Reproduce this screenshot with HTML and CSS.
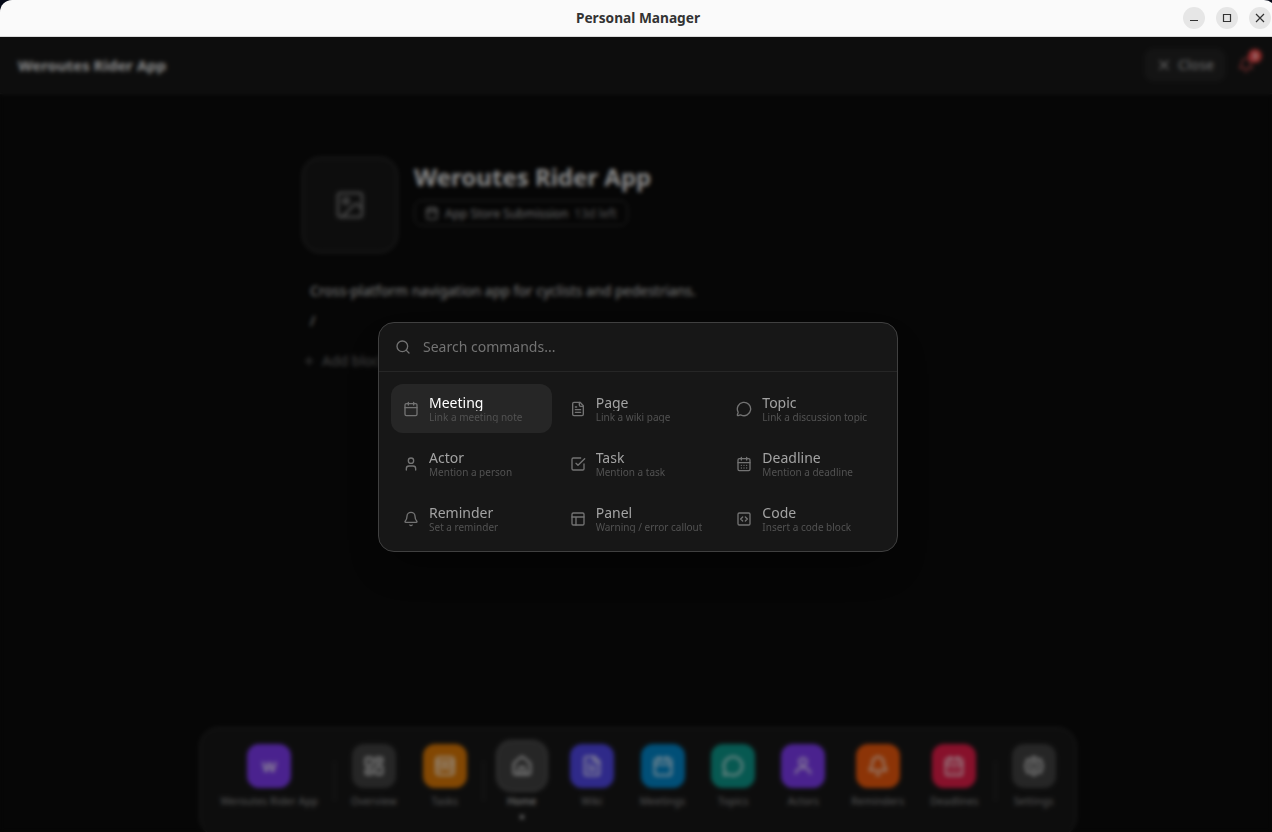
FILE: index.html
```html
<!DOCTYPE html>
<html lang="en">
<head>
    <meta charset="UTF-8">
    <meta name="viewport" content="width=device-width, initial-scale=1.0">
    <title>Personal Manager</title>
    <link rel="stylesheet" href="styles.css">
</head>
<body>
    <svg class="sprite">
        <symbol id="calendar" viewBox="0 0 24 24"><path d="M8 2v4M16 2v4M3 10h18"/><rect x="3" y="4" width="18" height="18" rx="2"/></symbol>
        <symbol id="calendar-days" viewBox="0 0 24 24"><path d="M8 2v4M16 2v4M3 10h18M8 14h.01M12 14h.01M16 14h.01M8 18h.01M12 18h.01M16 18h.01"/><rect x="3" y="4" width="18" height="18" rx="2"/></symbol>
        <symbol id="file" viewBox="0 0 24 24"><path d="M15 2H6a2 2 0 0 0-2 2v16a2 2 0 0 0 2 2h12a2 2 0 0 0 2-2V7Z"/><path d="M14 2v4a2 2 0 0 0 2 2h4M10 9H8M16 13H8M16 17H8"/></symbol>
        <symbol id="message" viewBox="0 0 24 24"><path d="M2.992 16.342a2 2 0 0 1 .094 1.167l-1.065 3.290a1 1 0 0 0 1.236 1.168l3.413-.998a2 2 0 0 1 1.099.092 10 10 0 1 0-4.777-4.719"/></symbol>
        <symbol id="user" viewBox="0 0 24 24"><path d="M19 21v-2a4 4 0 0 0-4-4H9a4 4 0 0 0-4 4v2"/><circle cx="12" cy="7" r="4"/></symbol>
        <symbol id="user-round" viewBox="0 0 24 24"><path d="M4 20c1-4 4-6 8-6s7 2 8 6"/><circle cx="12" cy="7.5" r="4"/></symbol>
        <symbol id="task" viewBox="0 0 24 24"><path d="m9 11 3 3L22 4"/><path d="M21 12v7a2 2 0 0 1-2 2H5a2 2 0 0 1-2-2V5a2 2 0 0 1 2-2h11"/></symbol>
        <symbol id="bell" viewBox="0 0 24 24"><path d="M10.268 21a2 2 0 0 0 3.464 0"/><path d="M3.262 15.326A1 1 0 0 0 4 17h16a1 1 0 0 0 .74-1.673C19.41 13.956 18 12.499 18 8A6 6 0 0 0 6 8c0 4.499-1.411 5.956-2.738 7.326"/></symbol>
        <symbol id="panel" viewBox="0 0 24 24"><rect x="3" y="3" width="18" height="18" rx="2"/><path d="M3 9h18M9 21V9"/></symbol>
        <symbol id="code" viewBox="0 0 24 24"><rect x="3" y="3" width="18" height="18" rx="2"/><path d="m10 9-3 3 3 3M14 9l3 3-3 3"/></symbol>
        <symbol id="search" viewBox="0 0 24 24"><circle cx="11" cy="11" r="8"/><path d="m21 21-4.300-4.300"/></symbol>
        <symbol id="image" viewBox="0 0 24 24"><rect x="3" y="3" width="18" height="18" rx="2"/><circle cx="9" cy="9" r="2"/><path d="m21 15-3.086-3.086a2 2 0 0 0-2.828 0L6 21"/></symbol>
        <symbol id="close" viewBox="0 0 24 24"><path d="M18 6 6 18M6 6l12 12"/></symbol>
        <symbol id="plus" viewBox="0 0 24 24"><path d="M5 12h14M12 5v14"/></symbol>
        <symbol id="overview" viewBox="0 0 24 24"><rect x="3" y="3" width="7" height="9" rx="1"/><rect x="14" y="3" width="7" height="5" rx="1"/><rect x="14" y="12" width="7" height="9" rx="1"/><rect x="3" y="16" width="7" height="5" rx="1"/></symbol>
        <symbol id="tray" viewBox="0 0 24 24"><rect x="2.500" y="2.500" width="19" height="19" rx="3"/><path d="M3 7.500h18"/><path d="M3 12h3c2 0 3-1 6-1s4 1 6 1h3M5 17c2 0 3-2.500 7-2.500s5 2.500 7 2.500"/></symbol>
        <symbol id="home" viewBox="0 0 24 24"><path d="M15 21v-7a1 1 0 0 0-1-1h-4a1 1 0 0 0-1 1v7"/><path d="M3 10a2 2 0 0 1 .709-1.528l7-6a2 2 0 0 1 2.582 0l7 6A2 2 0 0 1 21 10v9a2 2 0 0 1-2 2H5a2 2 0 0 1-2-2z"/></symbol>
        <symbol id="settings" viewBox="0 0 24 24"><path d="m12 2 3 2.800 4.500 0 .8 4L21.500 12l-1.200 3.200-.8 4-4.500 0L12 22l-3-2.800-4.500 0-.8-4L2.500 12l1.200-3.200.8-4 4.500 0Z"/><circle cx="12" cy="12" r="4"/></symbol>
    </svg>

    <div class="window">
        <div class="titlebar">
            <span class="titlebar-name">Personal Manager</span>
            <div class="controls">
                <span class="control"><svg viewBox="0 0 22 22"><path d="M7 13.500h8"/></svg></span>
                <span class="control"><svg viewBox="0 0 22 22"><path d="M7.500 7.500h7v7h-7z"/></svg></span>
                <span class="control"><svg viewBox="0 0 22 22"><path d="m7 7 8 8M15 7l-8 8"/></svg></span>
            </div>
        </div>

        <div class="app">
            <header class="header">
                <span class="header-title">Weroutes Rider App</span>
                <div class="header-actions">
                    <button class="close-btn"><svg class="icon"><use href="#close"/></svg>Close</button>
                    <span class="alerts"><svg class="icon"><use href="#bell"/></svg><span class="badge">3</span></span>
                </div>
            </header>

            <main class="content">
                <div class="project">
                    <div class="cover"><svg class="icon"><use href="#image"/></svg></div>
                    <div>
                        <h1>Weroutes Rider App</h1>
                        <div class="milestone">
                            <svg class="icon"><use href="#calendar"/></svg>
                            <span>App Store Submission</span>
                            <span class="left">13d left</span>
                        </div>
                    </div>
                </div>
                <p class="block">Cross-platform navigation app for cyclists and pedestrians.</p>
                <p class="block">/</p>
                <div class="add-block"><svg class="icon"><use href="#plus"/></svg>Add block</div>
            </main>

            <nav class="dock">
                <div class="dock-item"><span class="tile violet">W</span><span class="label">Weroutes Rider App</span></div>
                <span class="sep"></span>
                <div class="dock-item"><span class="tile gray"><svg class="icon"><use href="#overview"/></svg></span><span class="label">Overview</span></div>
                <div class="dock-item"><span class="tile amber"><svg class="icon"><use href="#tray"/></svg></span><span class="label">Tasks</span></div>
                <span class="sep"></span>
                <div class="dock-item active"><span class="tile gray"><svg class="icon"><use href="#home"/></svg></span><span class="label">Home</span><span class="dot"></span></div>
                <div class="dock-item"><span class="tile indigo"><svg class="icon"><use href="#file"/></svg></span><span class="label">Wiki</span></div>
                <div class="dock-item"><span class="tile sky"><svg class="icon"><use href="#calendar"/></svg></span><span class="label">Meetings</span></div>
                <div class="dock-item"><span class="tile teal"><svg class="icon"><use href="#message"/></svg></span><span class="label">Topics</span></div>
                <div class="dock-item"><span class="tile violet"><svg class="icon"><use href="#user-round"/></svg></span><span class="label">Actors</span></div>
                <div class="dock-item"><span class="tile orange"><svg class="icon"><use href="#bell"/></svg></span><span class="label">Reminders</span></div>
                <div class="dock-item"><span class="tile rose"><svg class="icon"><use href="#calendar-days"/></svg></span><span class="label">Deadlines</span></div>
                <span class="sep"></span>
                <div class="dock-item"><span class="tile gray"><svg class="icon"><use href="#settings"/></svg></span><span class="label">Settings</span></div>
            </nav>

            <div class="overlay">
                <div class="palette">
                    <div class="search">
                        <svg class="icon"><use href="#search"/></svg>
                        <input type="text" placeholder="Search commands...">
                    </div>
                    <div class="commands">
                        <div class="command selected"><svg class="icon"><use href="#calendar"/></svg><div><div class="name">Meeting</div><div class="hint">Link a meeting note</div></div></div>
                        <div class="command"><svg class="icon"><use href="#file"/></svg><div><div class="name">Page</div><div class="hint">Link a wiki page</div></div></div>
                        <div class="command"><svg class="icon"><use href="#message"/></svg><div><div class="name">Topic</div><div class="hint">Link a discussion topic</div></div></div>
                        <div class="command"><svg class="icon"><use href="#user"/></svg><div><div class="name">Actor</div><div class="hint">Mention a person</div></div></div>
                        <div class="command"><svg class="icon"><use href="#task"/></svg><div><div class="name">Task</div><div class="hint">Mention a task</div></div></div>
                        <div class="command"><svg class="icon"><use href="#calendar-days"/></svg><div><div class="name">Deadline</div><div class="hint">Mention a deadline</div></div></div>
                        <div class="command"><svg class="icon"><use href="#bell"/></svg><div><div class="name">Reminder</div><div class="hint">Set a reminder</div></div></div>
                        <div class="command"><svg class="icon"><use href="#panel"/></svg><div><div class="name">Panel</div><div class="hint">Warning / error callout</div></div></div>
                        <div class="command"><svg class="icon"><use href="#code"/></svg><div><div class="name">Code</div><div class="hint">Insert a code block</div></div></div>
                    </div>
                </div>
            </div>
        </div>
    </div>
</body>
</html>
```
FILE: styles.css
```css
* {
    box-sizing: border-box;
}
body {
    margin: 0;
    height: 832px;
    overflow: hidden;
    background: #060a18;
    font-family: "Noto Sans", sans-serif;
    color: #e5e5e5;
}
h1, p {
    margin: 0;
}
.sprite {
    display: none;
}
.icon {
    width: 16px;
    height: 16px;
    flex: none;
    fill: none;
    stroke: currentColor;
    stroke-width: 2;
    stroke-linecap: round;
    stroke-linejoin: round;
}
.window {
    width: 1276px;
    height: 832px;
    display: flex;
    flex-direction: column;
    border-radius: 12px 12px 0 0;
    overflow: hidden;
}

/* title bar */
.titlebar {
    height: 37px;
    flex: none;
    display: grid;
    grid-template-columns: 1fr auto 1fr;
    align-items: center;
    background: #fafafa;
    border-bottom: 1px solid #d9d9d9;
    color: #333;
}
.titlebar-name {
    grid-column: 2;
    padding-bottom: 2px;
    font-size: 13.7px;
    font-weight: 700;
}
.controls {
    display: flex;
    justify-content: flex-end;
    gap: 11px;
    padding-right: 5px;
}
.control {
    width: 22px;
    height: 22px;
    border-radius: 50%;
    background: #e6e6e6;
}
.control svg {
    display: block;
    width: 22px;
    height: 22px;
    fill: none;
    stroke: #333;
    stroke-width: 1.2;
}

/* app */
.app {
    position: relative;
    flex: 1;
    display: flex;
    flex-direction: column;
    min-height: 0;
    background: #0a0a0a;
}
.header {
    height: 57px;
    flex: none;
    display: flex;
    align-items: center;
    justify-content: space-between;
    padding: 0 22px 0 18px;
    background: #171717;
    border-bottom: 1px solid #262626;
}
.header-title {
    font-size: 15px;
    font-weight: 700;
}
.header-actions {
    display: flex;
    align-items: center;
    gap: 13px;
}
.close-btn {
    display: flex;
    align-items: center;
    gap: 6px;
    height: 32px;
    padding: 0 10px 1px;
    border: 1px solid #262626;
    border-radius: 8px;
    background: #222;
    color: #a3a3a3;
    font: 500 14px "Noto Sans", sans-serif;
}
.close-btn .icon {
    stroke-width: 2.6;
}
.alerts {
    position: relative;
    display: flex;
    color: #e25555;
}
.badge {
    position: absolute;
    top: -8px;
    right: -8px;
    width: 14px;
    height: 14px;
    border-radius: 50%;
    background: #ef4444;
    color: #fff;
    font-size: 9px;
    font-weight: 700;
    line-height: 14px;
    text-align: center;
}
.content {
    width: 672px;
    flex: 1;
    margin: 0 auto;
    padding-top: 63px;
}
.project {
    display: flex;
    gap: 16px;
    margin-bottom: 27px;
}
.cover {
    width: 96px;
    height: 96px;
    display: flex;
    align-items: center;
    justify-content: center;
    border: 1px solid #404040;
    border-radius: 18px;
    background: #171717;
    color: #737373;
}
.cover .icon {
    width: 32px;
    height: 32px;
}
h1 {
    margin-top: 4px;
    font-size: 24px;
    font-weight: 700;
    line-height: 32px;
}
.milestone {
    display: inline-flex;
    align-items: center;
    gap: 6px;
    height: 26px;
    margin-top: 7px;
    padding: 0 10px;
    border: 1px solid #404040;
    border-radius: 8px;
    color: #b5b5b5;
    font-size: 12px;
}
.milestone .icon {
    width: 14px;
    height: 14px;
}
.milestone .left {
    color: #8a8a8a;
}
.block {
    padding-left: 8px;
    color: #d4d4d4;
    font-size: 14px;
    line-height: 22px;
    margin-bottom: 8px;
}
.add-block {
    display: flex;
    align-items: center;
    gap: 6px;
    margin-top: 19px;
    color: #737373;
    font-size: 14px;
    line-height: 20px;
}
.add-block .icon {
    width: 14px;
    height: 14px;
}

/* dock */
.dock {
    height: 110px;
    flex: none;
    align-self: center;
    display: flex;
    gap: 6px;
    margin-bottom: -5px;
    padding: 16px 10px 0;
    border: 1px solid #303030;
    border-radius: 20px;
    background: #171717;
}
.dock-item {
    display: flex;
    flex-direction: column;
    align-items: center;
    padding: 0 10px;
}
.tile {
    width: 44px;
    height: 44px;
    display: flex;
    align-items: center;
    justify-content: center;
    border-radius: 12px;
    color: rgba(255, 255, 255, .8);
    font-size: 15px;
    font-weight: 700;
}
.tile .icon {
    width: 22px;
    height: 22px;
    stroke-width: 2.2;
}
.active .tile {
    background: #404040;
    box-shadow: 0 0 0 3px #404040, 0 0 0 4px #666;
}
.label {
    margin-top: 6px;
    color: #808080;
    font-size: 10.25px;
    font-weight: 500;
    line-height: 14px;
    white-space: nowrap;
}
.active .label {
    color: #c4c4c4;
}
.dot {
    width: 4px;
    height: 4px;
    margin-top: 7px;
    border-radius: 50%;
    background: #d4d4d4;
}
.sep {
    width: 1px;
    height: 40px;
    margin-top: 17px;
    background: #303030;
}
.violet { background: #7c3aed; }
.gray { background: #404040; }
.amber { background: #d97706; }
.indigo { background: #4f46e5; }
.sky { background: #0284c7; }
.teal { background: #0d9488; }
.orange { background: #ea580c; }
.rose { background: #e11d48; }

/* command palette */
.overlay {
    position: absolute;
    inset: 0;
    display: flex;
    align-items: flex-start;
    justify-content: center;
    padding-top: 285px;
    background: rgba(0, 0, 0, .4);
    backdrop-filter: blur(2px);
}
.palette {
    width: 520px;
    height: 230px;
    border: 1px solid #404040;
    border-radius: 16px;
    background: #171717;
    box-shadow: 0 20px 40px -12px rgba(0, 0, 0, .5);
}
.search {
    height: 49px;
    display: flex;
    align-items: center;
    gap: 12px;
    padding: 0 16px;
    border-bottom: 1px solid #262626;
    color: #737373;
}
.search input {
    flex: 1;
    padding: 0 0 2px;
    border: none;
    outline: none;
    background: none;
    color: #e5e5e5;
    font: 14px "Noto Sans", sans-serif;
}
.search input::placeholder {
    color: #737373;
}
.commands {
    display: grid;
    grid-template-columns: repeat(3, 1fr);
    gap: 6px;
    padding: 12px 12px 8px;
}
.command {
    height: 49px;
    display: flex;
    align-items: center;
    gap: 10px;
    padding: 0 12px;
    border-radius: 12px;
    color: #737373;
}
.selected {
    background: #262626;
}
.name {
    overflow: hidden;
    color: #a3a3a3;
    font-size: 14px;
    line-height: 17px;
    white-space: nowrap;
}
.selected .name {
    color: #fff;
}
.hint {
    overflow: hidden;
    color: #525252;
    font-size: 10px;
    line-height: 12px;
    white-space: nowrap;
}
```
